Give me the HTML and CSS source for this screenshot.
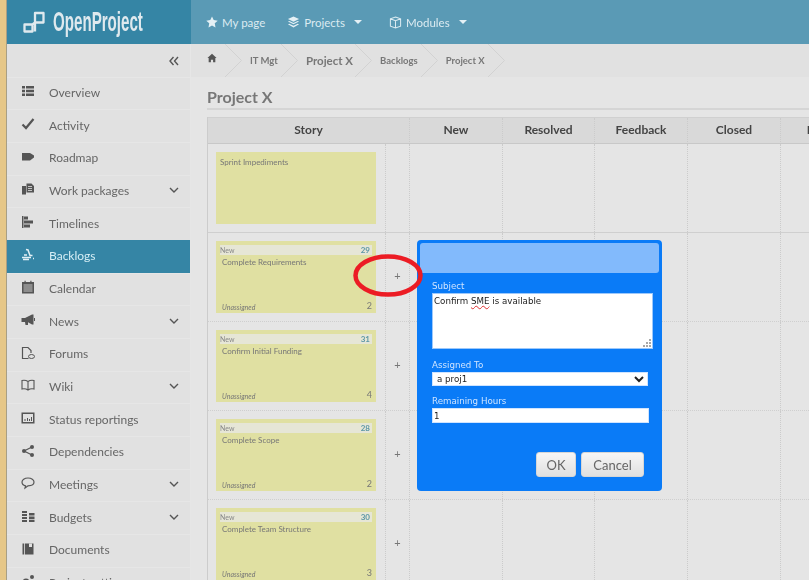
FILE: index.html
```html
<!DOCTYPE html>
<html lang="en">
<head>
<meta charset="utf-8">
<title>Project X - Backlogs</title>
<link rel="stylesheet" href="styles.css">
</head>
<body>
<div class="strip"></div>
<div class="app">
  <header class="topbar">
    <a class="logo">
      <svg class="logo-mark" viewBox="0 0 22 22" width="22" height="22"><path d="M1.500 13.500h8v7h-8zM12 20.500V2h8.500v9.500H12M9.500 13.500L12 11.500" fill="none" stroke="#dfe9ee" stroke-width="2.300" stroke-linejoin="round"/></svg>
      <span class="logo-text">OpenProject</span>
    </a>
    <nav class="topnav">
      <a class="topnav-item mypage"><svg viewBox="0 0 14 14" width="12" height="12"><path d="M7 .5l2 4.300 4.700.6-3.500 3.200.9 4.700L7 11l-4.100 2.300.9-4.700L.3 5.400 5 4.800z" fill="#e4f0f5"/></svg>My page</a>
      <a class="topnav-item projects"><svg viewBox="0 0 14 14" width="13" height="13"><path d="M7 .5l6 2.800-6 2.800-6-2.800zM1 6l1.500-.6L7 7.500l4.500-2.100L13 6 7 8.800zM1 9l1.500-.7L7 10.500l4.500-2.200L13 9l-6 3.500z" fill="#e4f0f5"/></svg>Projects<i class="caret"></i></a>
      <a class="topnav-item modules"><svg viewBox="0 0 14 14" width="13" height="13"><path d="M7 1l5.500 2v8L7 13l-5.500-2V3zM1.500 3L7 5l5.500-2M7 5v8" fill="none" stroke="#dcecf2" stroke-width="1.100"/></svg>Modules<i class="caret"></i></a>
    </nav>
  </header>

  <div class="body-row">
    <aside class="sidebar">
      <div class="collapse-row"><svg viewBox="0 0 10 10" width="10" height="10"><path d="M4.500 1L1 5l3.500 4M9 1L5.500 5 9 9" fill="none" stroke="#555" stroke-width="1.400"/></svg></div>
      <ul class="menu">
        <li class="menu-item"><svg class="mi" viewBox="0 0 14 14"><path d="M1 2h3v2.400H1zM5 2h8v2.400H5zM1 5.800h3v2.400H1zM5 5.800h8v2.400H5zM1 9.600h3V12H1zM5 9.600h8V12H5z"/></svg><span>Overview</span></li>
        <li class="menu-item"><svg class="mi" viewBox="0 0 14 14"><path d="M1.500 7.500l3.500 3.500 7.500-9" fill="none" stroke="#555" stroke-width="2.200"/></svg><span>Activity</span></li>
        <li class="menu-item"><svg class="mi" viewBox="0 0 14 14"><path d="M1 3h8l4 2.500v2L9 10.500H1z"/></svg><span>Roadmap</span></li>
        <li class="menu-item"><svg class="mi" viewBox="0 0 14 14"><path d="M1 4h4v8.500H1zM5.500 1.500h5L13 4v6.500H5.500z"/><path d="M7 4.500h4M7 6.500h4M7 8.500h4" stroke="#e1e1e1" stroke-width=".8"/></svg><span>Work packages</span><svg class="chev" viewBox="0 0 10 6"><path d="M1 1l4 4 4-4" fill="none" stroke="#555" stroke-width="1.400"/></svg></li>
        <li class="menu-item"><svg class="mi" viewBox="0 0 14 14"><path d="M1 1h1.500v12H1zM3 1.500h4v3H3zM3 5.500h9v3H3zM3 9.500h6v3H3z"/></svg><span>Timelines</span></li>
        <li class="menu-item active"><svg class="mi" viewBox="0 0 14 14"><path d="M5 1.500l2 .5 2 5.500h2.500M1 9.500h9M2 11.500h6M3 7h3M12 10.500h1" fill="none" stroke="#e2f0f5" stroke-width="1.500"/></svg><span>Backlogs</span></li>
        <li class="menu-item"><svg class="mi" viewBox="0 0 14 14"><path d="M1 2h2.500V.8h1.200V2h4.600V.8h1.200V2H13v11.500H1z"/><path d="M2.500 5h9M2.500 7h9M2.500 9h9M2.500 11h9" stroke="#e1e1e1" stroke-width=".8"/></svg><span>Calendar</span></li>
        <li class="menu-item"><svg class="mi" viewBox="0 0 14 14"><path d="M.5 5H4L11 1.500h1.500v10H11L7 9.200V12H4.500L4 9H.5zM13 5h1v3h-1z"/></svg><span>News</span><svg class="chev" viewBox="0 0 10 6"><path d="M1 1l4 4 4-4" fill="none" stroke="#555" stroke-width="1.400"/></svg></li>
        <li class="menu-item"><svg class="mi" viewBox="0 0 14 14"><path d="M7.500 12.500H1.500v-11h5.500l3 3v2.500" fill="none" stroke="#555" stroke-width="1.200"/><ellipse cx="10.500" cy="10.500" rx="3" ry="2" fill="none" stroke="#555"/></svg><span>Forums</span></li>
        <li class="menu-item"><svg class="mi" viewBox="0 0 14 14"><path d="M7 3.500C5.500 2.500 3 2 1 2.500v8.500c2-.5 4.500 0 6 1 1.500-1 4-1.500 6-1V2.500C11 2 8.500 2.500 7 3.500zM7 3.500V12" fill="none" stroke="#555" stroke-width="1.100"/></svg><span>Wiki</span><svg class="chev" viewBox="0 0 10 6"><path d="M1 1l4 4 4-4" fill="none" stroke="#555" stroke-width="1.400"/></svg></li>
        <li class="menu-item"><svg class="mi" viewBox="0 0 14 14"><path fill-rule="evenodd" d="M.5 1.500h13v11H.5zM2 3v8h10V3z"/><path d="M3.500 8h1v2h-1zM6 7h1v3H6zM8 8h1v2H8zM10 6h1v4h-1z"/></svg><span>Status reportings</span></li>
        <li class="menu-item"><svg class="mi" viewBox="0 0 14 14"><path d="M11 3L3 7l8 4" fill="none" stroke="#555" stroke-width="1.200"/><circle cx="11" cy="3" r="2"/><circle cx="3" cy="7" r="2"/><circle cx="11" cy="11" r="2"/></svg><span>Dependencies</span></li>
        <li class="menu-item"><svg class="mi" viewBox="0 0 14 14"><path d="M7 2C3.500 2 1 3.700 1 6s2 3.500 3.500 3.800L4 12l3-2.200c3.500 0 6-1.500 6-3.800S10.500 2 7 2z" fill="none" stroke="#555" stroke-width="1.200"/></svg><span>Meetings</span><svg class="chev" viewBox="0 0 10 6"><path d="M1 1l4 4 4-4" fill="none" stroke="#555" stroke-width="1.400"/></svg></li>
        <li class="menu-item"><svg class="mi" viewBox="0 0 14 14"><path d="M1 2h5v2H1zM1 5h5v2H1zM1 8h5v2H1zM1 11h5v2H1zM8 4h5.500v2.500H8zM8 7.500h5.500V10H8zM8 10.800h5.500V13H8z"/></svg><span>Budgets</span><svg class="chev" viewBox="0 0 10 6"><path d="M1 1l4 4 4-4" fill="none" stroke="#555" stroke-width="1.400"/></svg></li>
        <li class="menu-item"><svg class="mi" viewBox="0 0 14 14"><path d="M1.500 1.500h1.700v11H1.500zM4 1.500h8.500v11H4z"/><path d="M8 1.500h3v3.500H8z" fill="#e1e1e1"/></svg><span>Documents</span></li>
        <li class="menu-item"><svg class="mi" viewBox="0 0 14 14"><circle cx="5" cy="8" r="3.500"/><circle cx="11" cy="3" r="2"/></svg><span>Project settings</span></li>
      </ul>
    </aside>

    <main class="main">
      <div class="breadcrumb">
        <svg class="home" viewBox="0 0 12 12" width="10" height="10"><path d="M6 1l5.500 5H10v5H7.300V8H4.700v3H2V6H.5z" fill="#555"/></svg>
        <svg class="sep" viewBox="0 0 17 33"><path d="M0 0l16.500 16.500L0 33" fill="none" stroke="#d2d2d2"/></svg>
        <a class="crumb crumb-sm">IT Mgt</a>
        <svg class="sep" viewBox="0 0 17 33"><path d="M0 0l16.500 16.500L0 33" fill="none" stroke="#d2d2d2"/></svg>
        <a class="crumb crumb-lg">Project X</a>
        <svg class="sep" viewBox="0 0 17 33"><path d="M0 0l16.500 16.500L0 33" fill="none" stroke="#d2d2d2"/></svg>
        <a class="crumb crumb-sm">Backlogs</a>
        <svg class="sep" viewBox="0 0 17 33"><path d="M0 0l16.500 16.500L0 33" fill="none" stroke="#d2d2d2"/></svg>
        <a class="crumb crumb-sm">Project X</a>
        <svg class="sep" viewBox="0 0 17 33"><path d="M0 0l16.500 16.500L0 33" fill="none" stroke="#d2d2d2"/></svg>
      </div>

      <div class="content">
        <h1 class="title">Project X</h1>
        <div class="board">
          <div class="row head">
            <div class="cell story-head">Story</div>
            <div class="cell">New</div>
            <div class="cell">Resolved</div>
            <div class="cell">Feedback</div>
            <div class="cell">Closed</div>
            <div class="cell">Rejected</div>
          </div>

          <div class="row first">
            <div class="cell story"><div class="card"><p class="card-title plain">Sprint Impediments</p></div></div>
            <div class="cell add"></div>
            <div class="cell"></div><div class="cell"></div><div class="cell"></div><div class="cell"></div><div class="cell"></div>
          </div>

          <div class="row">
            <div class="cell story"><div class="card">
              <div class="card-head"><span>New</span><b>29</b></div>
              <p class="card-title">Complete Requirements</p>
              <div class="card-foot"><em>Unassigned</em><span>2</span></div>
            </div></div>
            <div class="cell add">+</div>
            <div class="cell"></div><div class="cell"></div><div class="cell"></div><div class="cell"></div><div class="cell"></div>
          </div>

          <div class="row">
            <div class="cell story"><div class="card">
              <div class="card-head"><span>New</span><b>31</b></div>
              <p class="card-title">Confirm Initial Funding</p>
              <div class="card-foot"><em>Unassigned</em><span>4</span></div>
            </div></div>
            <div class="cell add">+</div>
            <div class="cell"></div><div class="cell"></div><div class="cell"></div><div class="cell"></div><div class="cell"></div>
          </div>

          <div class="row">
            <div class="cell story"><div class="card">
              <div class="card-head"><span>New</span><b>28</b></div>
              <p class="card-title">Complete Scope</p>
              <div class="card-foot"><em>Unassigned</em><span>2</span></div>
            </div></div>
            <div class="cell add">+</div>
            <div class="cell"></div><div class="cell"></div><div class="cell"></div><div class="cell"></div><div class="cell"></div>
          </div>

          <div class="row">
            <div class="cell story"><div class="card">
              <div class="card-head"><span>New</span><b>30</b></div>
              <p class="card-title">Complete Team Structure</p>
              <div class="card-foot"><em>Unassigned</em><span>3</span></div>
            </div></div>
            <div class="cell add">+</div>
            <div class="cell"></div><div class="cell"></div><div class="cell"></div><div class="cell"></div><div class="cell"></div>
          </div>
        </div>
      </div>
    </main>
  </div>
</div>

<section class="dialog">
  <div class="dialog-title"></div>
  <form class="dialog-form">
    <label class="field-label first-label">Subject</label>
    <div class="area">Confirm <span class="typo">SME</span> is available
      <svg class="grip" viewBox="0 0 8 8" width="8" height="8"><path d="M6 0h2v2H6zM3 3h2v2H3zM6 3h2v2H6zM0 6h2v2H0zM3 6h2v2H3zM6 6h2v2H6z" fill="#a8a8a8"/></svg>
    </div>
    <label class="field-label assigned-label">Assigned To</label>
    <select class="select"><option>a proj1</option></select>
    <label class="field-label hours-label">Remaining Hours</label>
    <input class="hours" type="text" value="1">
    <div class="actions">
      <button class="btn ok" type="button">OK</button>
      <button class="btn cancel" type="button">Cancel</button>
    </div>
  </form>
</section>

<svg class="annotation" width="74" height="47" viewBox="0 0 74 47"><ellipse cx="37" cy="23.500" rx="32.500" ry="19" fill="none" stroke="#ec1c24" stroke-width="4.500"/></svg>
</body>
</html>
```

FILE: styles.css
```css
* { box-sizing: border-box; }
html, body { margin: 0; height: 580px; overflow: hidden; }
body {
  position: relative;
  display: flex;
  width: 809px;
  font-family: "Lato", "Open Sans", sans-serif;
  background: #e5e5e5;
  color: #666;
}
.strip {
  flex: 0 0 7px;
  background: #e6c788;
  border-right: 1px solid #a89f85;
}
.app { flex: 1; min-width: 0; display: flex; flex-direction: column; height: 580px; overflow: hidden; filter: blur(.35px); }

/* top bar */
.topbar { flex: 0 0 44px; display: flex; background: #5a9ab5; }
.logo {
  flex: 0 0 184px;
  min-width: 0;
  display: flex;
  align-items: center;
  gap: 8px;
  padding-left: 16px;
  background: #3585a5;
}
.logo-mark { flex: none; }
.logo-text {
  display: inline-block;
  flex: 0 0 90px;
  font-family: "Liberation Sans", sans-serif;
  font-size: 28px;
  font-weight: 700;
  color: #dfe9ee;
  transform: scaleX(.54);
  transform-origin: left center;
  white-space: nowrap;
}
.topnav { display: flex; align-items: center; font-size: 11.500px; color: #dcebf1; }
.topnav-item { display: flex; align-items: center; gap: 4px; white-space: nowrap; }
.mypage { margin-left: 15px; }
.projects { margin-left: 22px; }
.modules { margin-left: 27px; }
.caret {
  width: 0; height: 0;
  margin-left: 5px;
  border-left: 4px solid transparent;
  border-right: 4px solid transparent;
  border-top: 4px solid #e4f0f5;
}

.body-row { flex: 1; display: flex; min-height: 0; }

/* sidebar */
.sidebar { flex: 0 0 184px; background: #e1e1e1; border-right: 1px solid #e6e6e6; }
.collapse-row { height: 32.67px; display: flex; align-items: center; justify-content: flex-end; padding: 1px 11px 0 0; }
.menu { list-style: none; margin: 0; padding: 0; }
.menu-item {
  height: 32.67px;
  display: flex;
  align-items: center;
  padding: 0 0 2px 14px;
  font-size: 12px;
  color: #666;
  border-top: 1px solid #e6e6e6;
}
.menu-item span { margin-left: 14px; flex: 1; white-space: nowrap; }
.mi { width: 14px; height: 14px; flex: none; fill: #555; margin-top: -2px; }
.chev { width: 10px; height: 6px; flex: none; margin-right: 11px; }
.menu-item.active { background: #3585a5; color: #d6eef5; border-top-color: #3585a5; }

/* main */
.main { flex: 1; min-width: 0; display: flex; flex-direction: column; }
.breadcrumb {
  flex: 0 0 32.67px;
  display: flex;
  align-items: center;
  padding-left: 16px;
  background: #e1e1e1;
  overflow: hidden;
}
.home { flex: none; margin-right: 8px; margin-top: -4px; }
.sep { flex: none; width: 17px; height: 33px; margin-right: 8px; }
.crumb { flex: none; margin-right: 3px; color: #777; white-space: nowrap; }
.crumb-sm { font-size: 9.500px; font-weight: 700; }
.crumb-lg { font-size: 11.500px; font-weight: 700; margin-right: 2px; }

.content { flex: 1; min-height: 0; padding: 0 0 0 16px; }
.title {
  margin: 0 0 7px;
  height: 33px;
  padding-top: 10px;
  font-size: 16px;
  line-height: 19px;
  font-weight: 700;
  color: #777;
  border-bottom: 2px solid #d5d5d5;
}

/* board */
.board { border-left: 1px solid #ccc; width: 700px; }
.row {
  display: grid;
  grid-template-columns: 178px 24px 93px 92px 93px 93px 99px;
  height: 89px;
  border-bottom: 1px dotted #cfcfcf;
}
.row.first { border-bottom: 1px solid #cfcfcf; }
.row.head {
  height: 27px;
  padding-bottom: 1px;
  background: #d9d9d9;
  border-top: 1px solid #d0d0d0;
  border-bottom: 1px solid #c8c8c8;
  font-size: 12px;
  font-weight: 700;
  color: #444;
}
.head .cell { display: flex; align-items: center; justify-content: center; }
.head .story-head { grid-column: span 2; }
.cell { border-right: 1px dotted #cbcbcb; min-width: 0; }
.story { padding: 8px 0 0 8px; }
.add { display: flex; align-items: center; justify-content: center; padding-bottom: 2px; font-size: 11px; color: #777; }

.card { width: 160px; height: 72px; background: #e0e0a2; padding: 4px; display: flex; flex-direction: column; color: #777; }
.card-head {
  height: 10px;
  display: flex;
  justify-content: space-between;
  align-items: center;
  padding: 0 2px 0 0;
  background: #e6e6d6;
  font-size: 7px;
  color: #888;
}
.card-head b { color: #5d97a6; font-size: 8px; }
.card-title { margin: 2px 0 0 2px; font-size: 8px; line-height: 11px; flex: 1; color: #777; }
.card-title.plain { margin-top: 1px; margin-left: 0; }
.card-foot { display: flex; justify-content: space-between; align-items: flex-end; height: 11px; margin-bottom: -2px; }
.card-foot em { font-size: 7px; margin-left: 2px; color: #777; }
.card-foot span { font-size: 9px; color: #777; }

/* dialog */
.dialog {
  position: absolute;
  left: 417px;
  top: 240px;
  width: 245px;
  height: 251px;
  padding: 3px;
  background: #0a7bf7;
  border-radius: 4px;
  font-family: "DejaVu Sans", sans-serif;
  filter: blur(.3px);
}
.dialog-title { height: 30px; background: #82bafc; border-radius: 3px; }
.dialog-form { padding-left: 12px; display: flex; flex-direction: column; align-items: flex-start; }
.field-label { font-size: 8.700px; line-height: 12px; color: #cfe4ff; height: 13px; }
.first-label { margin-top: 7px; }
.area {
  position: relative;
  width: 221px;
  height: 56px;
  padding: 1px 1px;
  background: #fff;
  border: 1px solid #9cc8fb;
  font-size: 8.700px;
  line-height: 12px;
  color: #222;
}
.typo { text-decoration: underline wavy #e03030 1px; }
.grip { position: absolute; right: 1px; bottom: 1px; }
.assigned-label { margin-top: 10px; }
.select {
  width: 216px;
  height: 14px;
  padding: 0;
  background: #fff;
  border: 1px solid #cfe4ff;
  border-radius: 0;
  font-family: inherit;
  font-size: 8.700px;
  color: #222;
}
.hours-label { margin-top: 9px; }
.hours {
  width: 217px;
  height: 15px;
  padding: 0 1px;
  background: #fff;
  border: 1px solid #cfe4ff;
  font-family: inherit;
  font-size: 8.700px;
  color: #222;
}
.actions { display: flex; gap: 5px; margin: 29px 0 0 104px; }
.btn {
  height: 25px;
  padding: 0;
  border: 1px solid #d6d6d6;
  border-radius: 3px;
  background: linear-gradient(#f6f6f6, #e0e0e0);
  font-family: "Lato", sans-serif;
  font-size: 13px;
  color: #666;
}
.ok { width: 40px; }
.cancel { width: 63px; }

.annotation { position: absolute; left: 351px; top: 252px; }
```
